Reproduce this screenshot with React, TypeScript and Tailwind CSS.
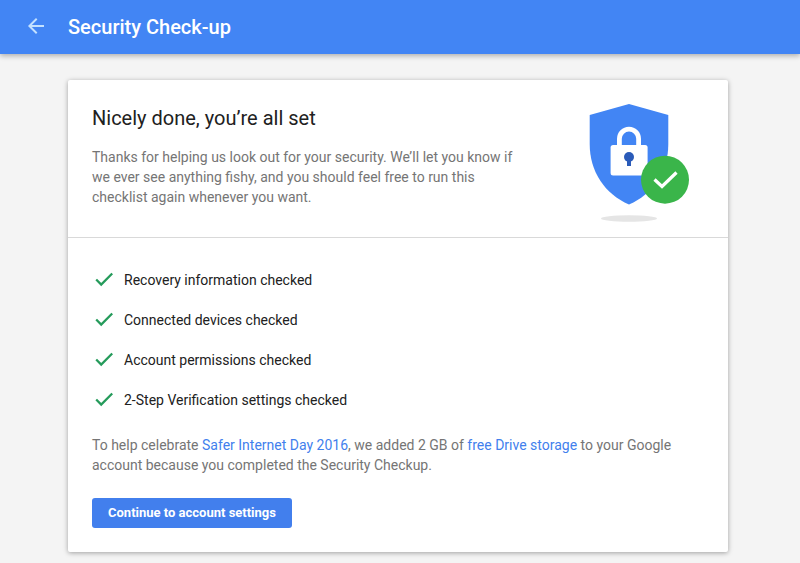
const checks: string[] = [
  'Recovery information checked',
  'Connected devices checked',
  'Account permissions checked',
  '2-Step Verification settings checked',
];

function BackArrow() {
  return (
    <svg width="24" height="24" viewBox="0 0 24 24" fill="#c3e1ff" aria-hidden="true">
      <path d="M20 10H7.830l5.590-5.590L12 3l-8 8 8 8 1.410-1.410L7.830 12H20v-2z" />
    </svg>
  );
}

function CheckMark() {
  return (
    <svg width="24" height="24" viewBox="0 0 24 24" fill="none" stroke="#259b5b" strokeWidth="2.300" aria-hidden="true">
      <path d="M4.200 11.500 9.200 16.500 20.200 5.500" />
    </svg>
  );
}

function ShieldArt() {
  return (
    <svg className="shrink-0" width="100" height="118" viewBox="0 0 100 118" aria-hidden="true">
      <ellipse cx="40" cy="114.500" rx="28" ry="3.300" fill="#e5e5e5" />
      <path d="M40 0 79.300 11V40C79.300 68 64 90 40 100.500 16 90 .7 68 .7 40V11Z" fill="#4285f4" />
      <path d="M30.400 43V34.800a9.600 9.600 0 0 1 19.200 0V43" fill="none" stroke="#fff" strokeWidth="4.800" />
      <rect x="21.600" y="41" width="37" height="30.500" rx="2.500" fill="#fff" />
      <circle cx="40" cy="53" r="5" fill="#2a5bb9" />
      <path d="M38 54h4v8h-4z" fill="#2a5bb9" />
      <circle cx="76" cy="75.700" r="24" fill="#3ab54a" />
      <path d="M65.500 75.500 73 82.500 87.500 68.500" fill="none" stroke="#fff" strokeWidth="3.200" />
    </svg>
  );
}

export default function App() {
  return (
    <div className="min-h-screen bg-[#f4f4f4] font-['Roboto',sans-serif] text-sm leading-5 text-[#757575]">
      <header className="relative flex h-[54px] items-center gap-5 bg-[#4285f4] px-6 shadow-[0_2px_5px_rgba(0,0,0,0.28)]">
        <button type="button" aria-label="Back" className="flex">
          <BackArrow />
        </button>
        <h1 className="text-xl font-medium text-white">Security Check-up</h1>
      </header>
      <main className="pt-[26px] pr-[72px] pb-[11px] pl-[68px]">
        <section className="mx-auto max-w-[660px] rounded-xs bg-white shadow-[0_1px_5px_rgba(0,0,0,0.35)]">
          <div className="flex justify-between gap-6 border-b border-[#d9d9d9] pt-6 pr-[39px] pb-[15px] pl-6">
            <div className="max-w-[440px]">
              <h2 className="text-xl leading-7 text-[#212121]">Nicely done, you’re all set</h2>
              <p className="mt-[15px]">
                Thanks for helping us look out for your security. We’ll let you know if we ever see anything fishy, and
                you should feel free to run this checklist again whenever you want.
              </p>
            </div>
            <ShieldArt />
          </div>
          <div className="px-6 pt-[30px] pb-6">
            <ul className="flex flex-col gap-4 text-[#212121]">
              {checks.map((label) => (
                <li key={label} className="flex items-center gap-2">
                  <CheckMark />
                  {label}
                </li>
              ))}
            </ul>
            <p className="mt-[23px]">
              To help celebrate{' '}
              <a href="#safer-internet-day" className="text-[#427fed]">
                Safer Internet Day 2016
              </a>
              , we added 2 GB of{' '}
              <a href="#drive-storage" className="text-[#427fed]">
                free Drive storage
              </a>{' '}
              to your Google account because you completed the Security Checkup.
            </p>
            <button
              type="button"
              className="mt-[23px] block h-[30px] rounded-[3px] bg-[#427fed] px-4 text-[13px] font-bold text-white"
            >
              Continue to account settings
            </button>
          </div>
        </section>
      </main>
    </div>
  );
}
